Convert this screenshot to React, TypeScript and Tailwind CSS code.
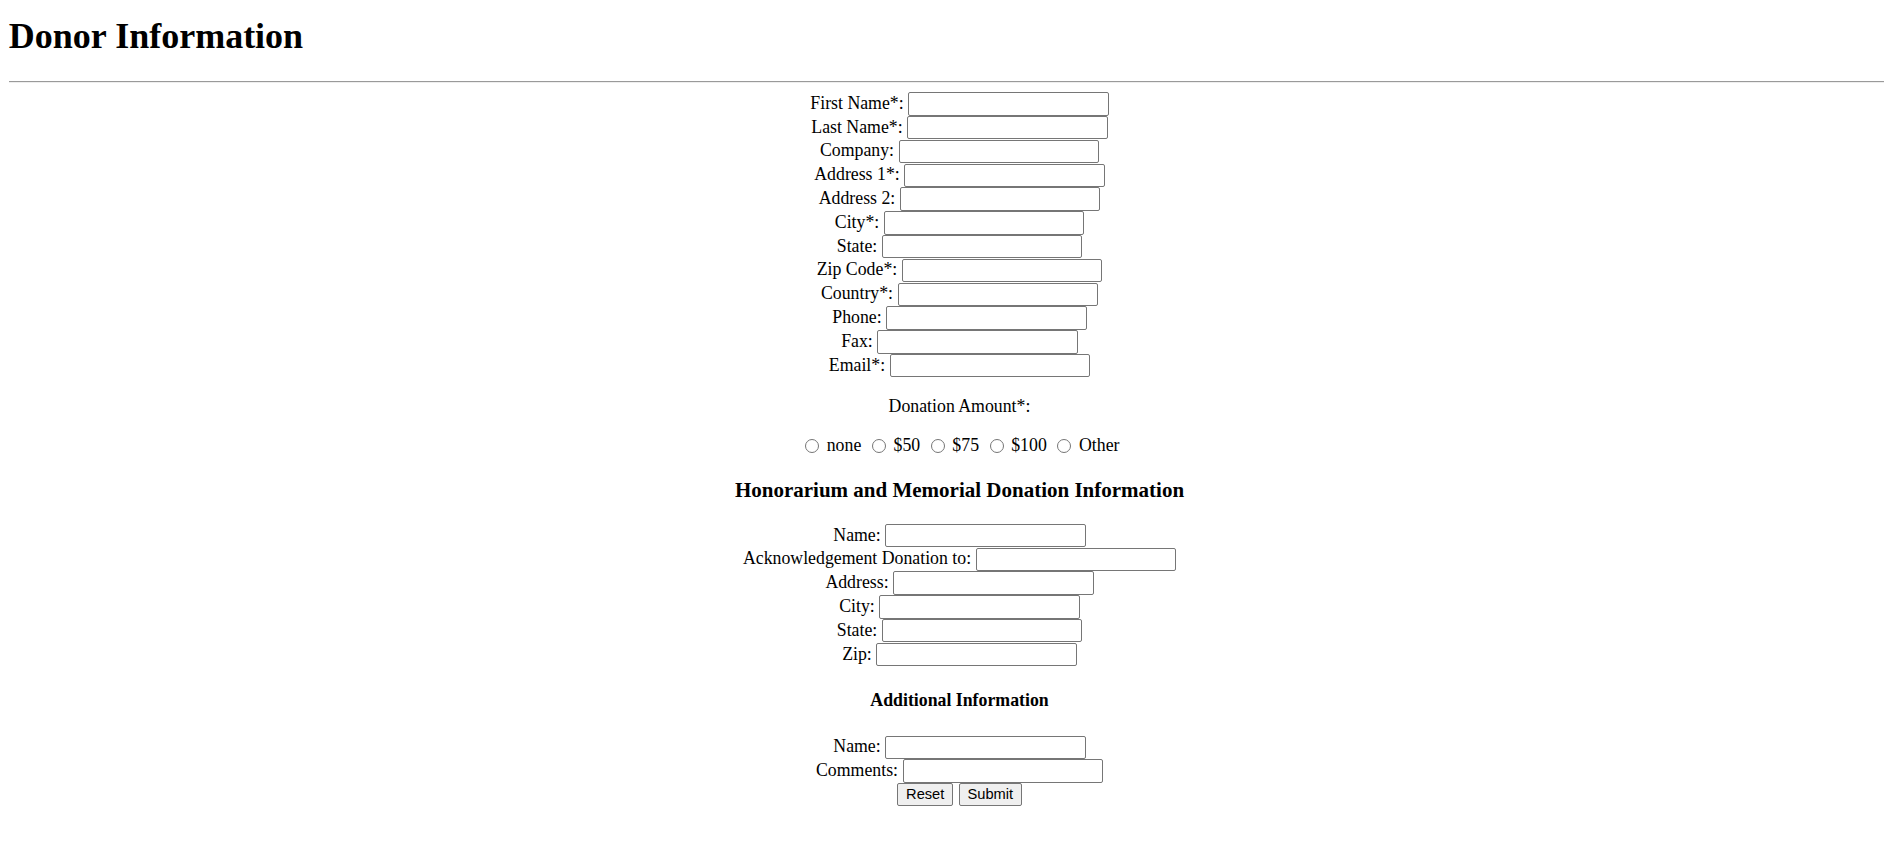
import type { ReactNode } from "react";

// Plain donor form, laid out like an unstyled HTML page viewed at 110% zoom.

const donorFields = [
  "First Name*:",
  "Last Name*:",
  "Company:",
  "Address 1*:",
  "Address 2:",
  "City*:",
  "State:",
  "Zip Code*:",
  "Country*:",
  "Phone:",
  "Fax:",
  "Email*:",
];

const honorFields = [
  "Name:",
  "Acknowledgement Donation to:",
  "Address:",
  "City:",
  "State:",
  "Zip:",
];

const amounts = ["none", "$50", "$75", "$100", "Other"];

function Row({ children }: { children: ReactNode }) {
  return (
    <div className="flex h-[23.8px] items-center justify-center gap-[4.5px] leading-[20px]">
      {children}
    </div>
  );
}

function Field({ label }: { label: string }) {
  return (
    <Row>
      <span className="pb-[2px]">{label}</span>
      <input
        type="text"
        className="h-[23.3px] w-[200.5px] rounded-[2px] border border-[#767676] bg-white px-[2px] font-['Liberation_Sans',sans-serif] text-[14.67px] outline-none"
      />
    </Row>
  );
}

export default function App() {
  return (
    <div className="min-h-screen bg-white px-[8.8px] font-['Liberation_Serif',serif] text-[17.8px] text-black">
      <h1 className="mt-[16px] text-[36px] font-bold leading-[40px]">Donor Information</h1>
      <hr className="mt-[24.7px] border-0 border-t border-b border-t-[#9a9a9a] border-b-[#eeeeee]" />

      <form className="pl-[26px] text-center" onSubmit={(e) => e.preventDefault()}>
        <div className="mt-[9.3px]">
          {donorFields.map((f) => (
            <Field key={f} label={f} />
          ))}
        </div>

        <p className="mt-[18.1px] leading-[20px]">Donation Amount*:</p>

        <div className="mt-[20px] flex h-[20px] items-center justify-center">
          {amounts.map((a, i) => (
            <label key={a} className="flex items-center">
              <input
                type="radio"
                name="amount"
                className={
                  "mr-[7.7px] h-[14px] w-[14px] appearance-none rounded-full border border-[#767676] bg-white " +
                  (i === 0 ? "ml-[5.5px]" : "ml-[10.5px]")
                }
              />
              <span>{a}</span>
            </label>
          ))}
        </div>

        <h3 className="mt-[22.6px] text-[21px] font-bold leading-[24px]">
          Honorarium and Memorial Donation Information
        </h3>

        <div className="mt-[21.4px]">
          {honorFields.map((f) => (
            <Field key={f} label={f} />
          ))}
        </div>

        <h4 className="mt-[23.5px] text-[17.8px] font-bold leading-[20px]">Additional Information</h4>

        <div className="mt-[25.4px]">
          <Field label="Name:" />
          <Field label="Comments:" />
          <div className="flex h-[23.8px] items-center justify-center gap-[5.3px]">
            <button
              type="reset"
              className="h-[23.3px] w-[56.4px] rounded-[2px] border border-[#767676] bg-[#efefef] font-['Liberation_Sans',sans-serif] text-[14.67px] leading-none"
            >
              Reset
            </button>
            <button
              type="submit"
              className="h-[23.3px] w-[63.3px] rounded-[2px] border border-[#767676] bg-[#efefef] font-['Liberation_Sans',sans-serif] text-[14.67px] leading-none"
            >
              Submit
            </button>
          </div>
        </div>
      </form>
    </div>
  );
}
